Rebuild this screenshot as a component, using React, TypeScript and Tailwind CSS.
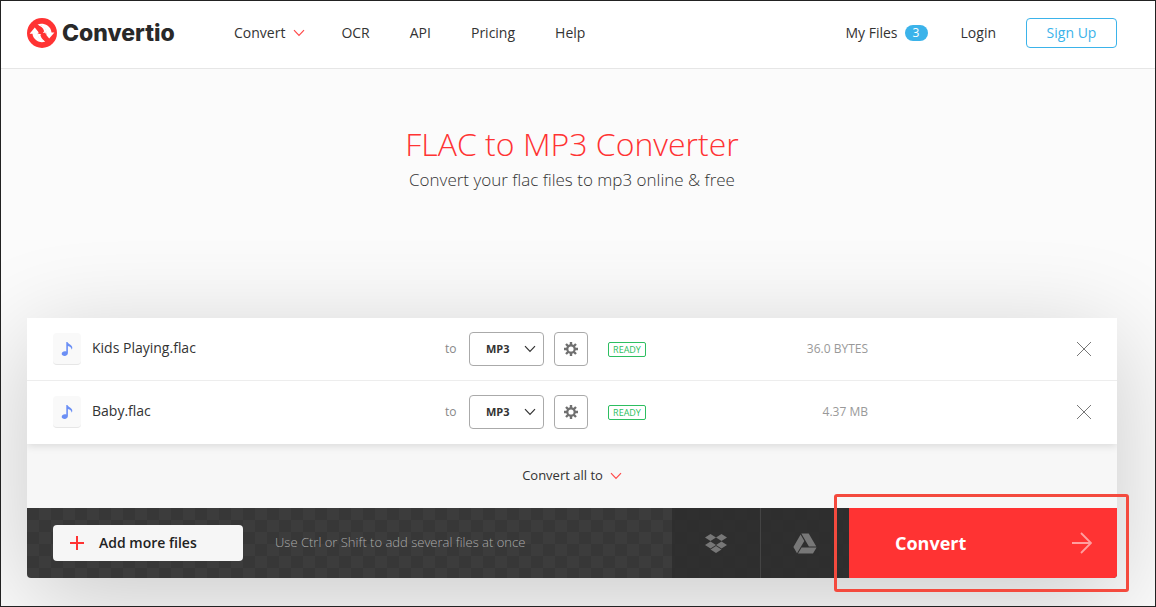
import React, { useState } from 'react';

interface AudioFile {
  name: string;
  size: string;
}

const files: AudioFile[] = [
  { name: 'Kids Playing.flac', size: '36.0 BYTES' },
  { name: 'Baby.flac', size: '4.37 MB' },
];

const Chevron: React.FC<{ className?: string }> = ({ className }) => (
  <svg viewBox="0 0 12 8" className={className} fill="none" stroke="currentColor" strokeWidth="1.2" aria-hidden="true">
    <path d="M1 1.2 6 6.4 11 1.2" />
  </svg>
);

const Logo = () => (
  <a href="#" className="flex items-center gap-[5px] text-[#292929]">
    <svg viewBox="0 0 30 30" className="h-[30px] w-[30px]" aria-hidden="true">
      <circle cx="15" cy="15" r="15" fill="#ff3333" />
      <path
        fill="#fff"
        d="M2.600 15.800 7.800 9.600l5 6.200h-2.200c.4 3.600 2.700 6.600 7.600 7.800-2.600 1.200-6 .9-8.600-1-2.500-1.800-3.900-4.200-4.100-6.800z"
      />
      <path
        fill="#fff"
        d="M27.400 14.400 22.200 20.600l-5-6.200h2.200c-.4-3.600-2.900-7-8.800-7.900 2.800-1.200 7.200-.8 9.800 1.100 2.500 1.800 3.900 4.200 4.100 6.800z"
      />
      <path fill="#fff" d="M10.600 6.500c5.500.2 8.400 3.200 9.400 8.500l-2.400-.6-1.800 1.100c-.3-3.600-1.900-6.800-5.200-9zM18.200 23.600c-4.600-.4-7.200-3.400-8.200-8.400l2.800.6 1.300-1.100c.3 3.500 1.500 6.400 4.100 8.900z" />
      <path
        fill="none"
        stroke="#ff3333"
        strokeWidth="2.400"
        d="M10.200 8.400c3.200.8 5 2.400 5.600 4.600l-2.600 1.800 4 1.400-2.400 1.400c.8 2.400 2.400 4 5 4.600"
      />
    </svg>
    <span className="font-['Inter',sans-serif] text-[23px] leading-[30px] font-extrabold">Convertio</span>
  </a>
);

const Header = () => (
  <header className="flex h-[68px] items-center border-b border-[#e6e6e6] bg-white pr-[38px] pb-[3px] pl-[26px] text-sm">
    <div className="w-[207px]">
      <Logo />
    </div>
    <nav className="flex flex-1 items-center gap-10">
      <button className="-mr-1 flex items-center gap-2">
        Convert
        <Chevron className="h-2 w-3 text-[#ff4a4a]" />
      </button>
      <a href="#">OCR</a>
      <a href="#">API</a>
      <a href="#">Pricing</a>
      <a href="#">Help</a>
    </nav>
    <a href="#" className="flex items-center gap-[7px]">
      My Files
      <span className="h-4 w-[23px] rounded-full bg-[#3bb3ea] text-center text-xs leading-4 text-white">3</span>
    </a>
    <a href="#" className="ml-[33px]">Login</a>
    <button className="ml-[30px] h-[30px] w-[91px] rounded border border-[#3bb3ea] text-[#3bb3ea]">Sign Up</button>
  </header>
);

const FileRow: React.FC<{ file: AudioFile; onRemove: () => void }> = ({ file, onRemove }) => (
  <li className="flex h-[63px] items-center border-b border-[#ededed] px-[26px] last:border-white">
    <span className="flex h-8 w-7 shrink-0 items-center justify-center rounded border-b border-[#e6e6e6] bg-[#f9f9f9]">
      <svg viewBox="0 0 12 16" className="h-4 w-3" fill="#6b8ff5" aria-hidden="true">
        <path d="M5.300 1h1.200c.3 2.200 5 2.500 4.800 6-.1.800-.4 1.200-.8 1.600.1-2-1.500-3-3.600-3.500V12c0 1.800-1.500 2.900-3.200 2.900C1.900 14.900.7 14 .7 12.700c0-1.500 1.500-2.500 3.200-2.500.5 0 1 .1 1.400.2z" />
      </svg>
    </span>
    <span className="ml-[11px] flex-1 truncate pb-0.5 text-sm">{file.name}</span>
    <span className="w-6 text-xs text-[#888]">to</span>
    <div className="relative">
      <select
        aria-label={`Output format for ${file.name}`}
        className="block h-[34px] w-[75px] appearance-none rounded border border-[#aaa] bg-white pl-4 text-[11px] font-bold text-[#333]"
      >
        <option>MP3</option>
        <option>WAV</option>
        <option>OGG</option>
      </select>
      <Chevron className="pointer-events-none absolute top-[13px] right-2 h-2 w-3 text-[#333]" />
    </div>
    <button aria-label="Settings" className="ml-2.5 flex h-[34px] w-[34px] items-center justify-center rounded border border-[#aaa] text-[#707070]">
      <svg viewBox="0 0 14 14" className="h-3.5 w-3.5" aria-hidden="true">
        <g stroke="currentColor" strokeWidth="2.400">
          <path d="M7 0v14M0 7h14M2 2l10 10M12 2 2 12" />
        </g>
        <circle cx="7" cy="7" r="3.700" fill="#fff" stroke="currentColor" strokeWidth="2.200" />
      </svg>
    </button>
    <span className="ml-5 h-[15px] w-[38px] rounded-xs border border-[#2dbe60] text-center text-[9px] leading-[13px] text-[#2dbe60]">
      READY
    </span>
    <span className="w-[222px] text-right text-xs text-[#999]">{file.size}</span>
    <span className="flex w-[223px] justify-end">
      <button aria-label={`Remove ${file.name}`} onClick={onRemove}>
        <svg viewBox="0 0 14 14" className="h-3.5 w-3.5" stroke="#777" aria-hidden="true">
          <path d="M0 0 14 14M14 0 0 14" />
        </svg>
      </button>
    </span>
  </li>
);

const ActionBar = () => (
  <div className="flex h-[70px] rounded-b bg-[repeating-conic-gradient(#3c3c3c_0_25%,#373737_0_50%)] bg-[length:24px_24px]">
    <div className="flex flex-1 items-center pl-[26px]">
      <button className="flex h-9 w-[190px] items-center gap-[15px] rounded bg-[#f6f6f6] pl-[17px] text-sm font-semibold text-[#222]">
        <svg viewBox="0 0 14 14" className="h-3.5 w-3.5" stroke="#ff3333" strokeWidth="2" aria-hidden="true">
          <path d="M7 0v14M0 7h14" />
        </svg>
        Add more files
      </button>
      <span className="ml-8 text-[13px] font-light text-[#aaa]">Use Ctrl or Shift to add several files at once</span>
    </div>
    <button aria-label="Add from Dropbox" className="flex w-[89px] items-center justify-center border-r border-[#444] bg-[#2c2c2c]/80">
      <svg viewBox="0 0 22 19" className="h-[19px] w-[22px]" fill="#777" aria-hidden="true">
        <path d="M5.500 0 11 3.500 5.500 7 0 3.500zM16.500 0 22 3.500 16.500 7 11 3.500zM5.500 7.400 11 10.900 5.500 14.400 0 10.900zM16.500 7.400 22 10.900 16.500 14.400 11 10.900zM11 12l5.500 3.500L11 19l-5.500-3.500z" />
      </svg>
    </button>
    <button aria-label="Add from Google Drive" className="flex w-[88px] items-center justify-center bg-[#2c2c2c]/80">
      <svg viewBox="0 0 24 21" className="h-[21px] w-6" fill="#777" aria-hidden="true">
        <path d="M8.300.5h7.400l7.600 13.100h-7.400zM7.600 1.500l3.700 6.400L4 20.300.400 14zM8.600 14.400h15L20 20.500H5z" />
      </svg>
    </button>
    <div className="relative flex">
      <button className="flex w-[268px] items-center justify-between rounded-br bg-[#ff3333] pr-[25px] pl-[46px] text-lg font-bold text-white">
        Convert
        <svg viewBox="0 0 20 22" className="h-[22px] w-5" fill="none" stroke="#ff9f9f" strokeWidth="1.800" aria-hidden="true">
          <path d="M0 11h19M9 1l10 10L9 21" />
        </svg>
      </button>
      <span className="pointer-events-none absolute -top-3.5 -right-3 -bottom-3.5 -left-[15px] rounded-[3px] border-3 border-[#f44a3e]" />
    </div>
  </div>
);

const App = () => {
  const [queue, setQueue] = useState(files);

  return (
    <div className="min-h-screen overflow-hidden border border-[#222] bg-[#fbfbfb] font-['Open_Sans','Liberation_Sans',sans-serif] text-[#333]">
      <Header />
      <main className="pr-[38px] pb-7 pl-[26px]">
        <div className="pt-[55px] text-center">
          <h1 className="text-[32px] leading-10 font-light text-[#ff3333]">FLAC to MP3 Converter</h1>
          <p className="text-[17px] leading-8 font-light">Convert your flac files to mp3 online &amp; free</p>
        </div>
        <section className="mt-[122px] rounded-b bg-[#f7f7f7] shadow-[0_20px_100px_rgba(0,0,0,0.2)]">
          <div className="overflow-hidden">
            <ul className="bg-white shadow-[0_2px_8px_rgba(0,0,0,0.12)]">
              {queue.map((file) => (
                <FileRow key={file.name} file={file} onRemove={() => setQueue(queue.filter((f) => f !== file))} />
              ))}
            </ul>
            <div className="flex h-16 items-center justify-center">
              <button className="flex items-center gap-[7px] text-[13px]">
                Convert all to
                <Chevron className="h-2 w-3 text-[#ff4a4a]" />
              </button>
            </div>
          </div>
          <ActionBar />
        </section>
      </main>
    </div>
  );
};

export default App;
